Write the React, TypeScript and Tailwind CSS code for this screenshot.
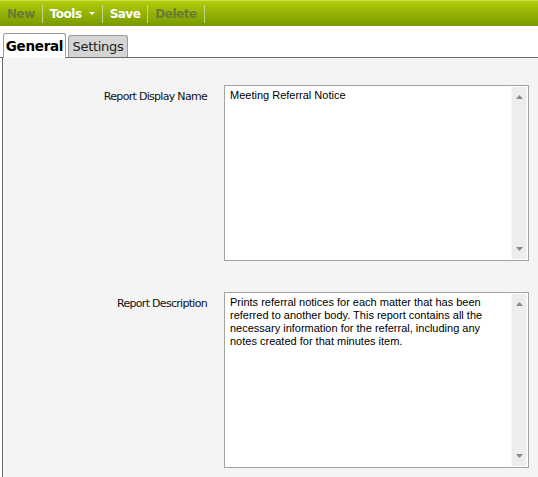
import React from 'react';

const toolbarItems = [
    { label: 'New', enabled: false },
    { label: 'Tools', enabled: true, menu: true },
    { label: 'Save', enabled: true },
    { label: 'Delete', enabled: false },
];

const Scrollbar: React.FC = () => (
    <div className="w-[16px] my-[1px] mr-[1px] flex flex-col justify-between items-center bg-[#ededed] border-x border-[#f6f6f6]">
        <svg width="7" height="4" viewBox="0 0 7 4" className="mt-[8px]">
            <path d="M3.5 0 L7 4 L0 4 Z" fill="#8a8a8a" />
        </svg>
        <svg width="7" height="4" viewBox="0 0 7 4" className="mb-[8px]">
            <path d="M0 0 L7 0 L3.5 4 Z" fill="#8a8a8a" />
        </svg>
    </div>
);

const FieldBox: React.FC<{ text: string }> = ({ text }) => (
    <div className="w-[305px] h-[176px] flex bg-white border border-[#a3a3a3]">
        <div className="flex-1 pl-[5px] pr-[6px] pt-[3px] text-[11px] leading-[13px] text-black font-['Liberation_Sans',Arial,sans-serif]">
            {text}
        </div>
        <Scrollbar />
    </div>
);

const Row: React.FC<{ label: string; text: string }> = ({ label, text }) => (
    <div className="flex items-start">
        <div className="w-[204px] pt-[4px] text-right text-[11px] text-[#111] font-['DejaVu_Sans',sans-serif] tracking-[-0.7px]">
            {label}
        </div>
        <div className="ml-[17px]">
            <FieldBox text={text} />
        </div>
    </div>
);

export default function App() {
    return (
        <div className="w-[538px] h-[477px] bg-white overflow-hidden font-['DejaVu_Sans',sans-serif]">
            {/* toolbar */}
            <div className="h-[26px] flex items-center bg-gradient-to-b from-[#b2cd0c] to-[#779900] border-t border-[#cde24a]">
                {toolbarItems.map((it) => (
                    <div key={it.label} className="flex items-center h-full">
                        <span className={`px-[7px] flex items-center text-[12px] font-bold tracking-[-0.5px] ${it.enabled ? 'text-white' : 'text-[#687b35]'}`}>
                            {it.label}
                            {it.menu && (
                                <svg width="6" height="3" viewBox="0 0 6 3" className="ml-[7px]">
                                    <path d="M0 0 L6 0 L3 3 Z" fill="#fff" />
                                </svg>
                            )}
                        </span>
                        <span className="w-px h-[18px] bg-[#c6d98a]" />
                    </div>
                ))}
            </div>

            {/* tabs */}
            <div className="h-[32px] flex items-end pl-[3px] border-b border-[#6b6b6b] relative">
                <div className="w-[63px] h-[25px] flex items-center justify-center bg-white border border-b-0 border-[#9a9a9a] rounded-t-[3px] text-[13.5px] font-semibold text-black -mb-px relative z-10 tracking-[-0.3px]">
                    General
                </div>
                <div className="ml-[2px] w-[60px] h-[22px] flex items-center justify-center bg-[#d5d5d5] border border-b-0 border-[#9a9a9a] rounded-t-[3px] text-[13px] text-[#222] tracking-[-0.3px]">
                    Settings
                </div>
            </div>

            {/* panel */}
            <div className="ml-[2px] h-full bg-[#f4f4f4] border-l border-[#6b6b6b] pt-[27px] flex flex-col gap-[31px]">
                <Row label="Report Display Name" text="Meeting Referral Notice" />
                <Row
                    label="Report Description"
                    text="Prints referral notices for each matter that has been referred to another body. This report contains all the necessary information for the referral, including any notes created for that minutes item."
                />
            </div>
        </div>
    );
}
